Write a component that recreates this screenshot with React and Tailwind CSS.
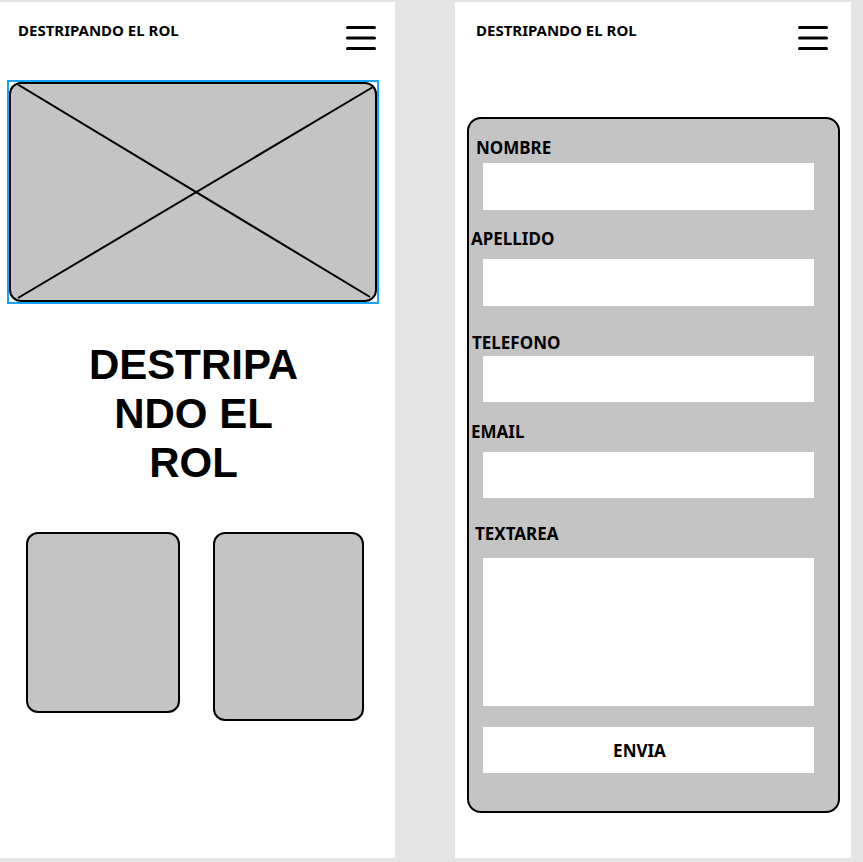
import React from "react";

const font = { fontFamily: '"Noto Sans", "Open Sans", sans-serif' };
const titleFont = { fontFamily: '"Liberation Sans", Arial, sans-serif' };

const Burger = () => (
  <svg width="30" height="25" viewBox="0 0 30 25" className="mt-[5.5px]">
    <line x1="1.5" y1="1.5" x2="28.5" y2="1.5" stroke="#000" strokeWidth="3" strokeLinecap="round" />
    <line x1="1.5" y1="12" x2="28.5" y2="12" stroke="#000" strokeWidth="3" strokeLinecap="round" />
    <line x1="1.5" y1="22.5" x2="28.5" y2="22.5" stroke="#000" strokeWidth="3" strokeLinecap="round" />
  </svg>
);

const Header = ({ pl, pr }) => (
  <div className={`h-[78px] flex items-start justify-between pt-[18px] ${pl} ${pr}`}>
    <span className="text-[15px] leading-[20px] font-bold text-black">DESTRIPANDO EL ROL</span>
    <Burger />
  </div>
);

const Field = ({ label, labelCls, inputCls }) => (
  <>
    <label className={`block text-[17px] leading-[22px] font-bold text-black ${labelCls}`}>{label}</label>
    <div className={`ml-[14px] w-[331px] bg-white ${inputCls}`} />
  </>
);

export default function App() {
  return (
    <div className="w-[863px] h-[862px] bg-[#e4e4e4] pt-[2px] flex" style={font}>
      {/* home screen */}
      <div className="w-[395px] h-[856px] bg-white flex flex-col">
        <Header pl="pl-[18px]" pr="pr-[19px]" />

        <div className="ml-[7px] w-[372px] h-[224px] border-2 border-[#18a0fb]">
          <div className="relative w-full h-full bg-[#c4c4c4] border-2 border-black rounded-[12px] overflow-hidden">
            <svg className="absolute -inset-[2px]" width="368" height="220" viewBox="0 0 368 220">
              <line x1="8" y1="2" x2="361" y2="215" stroke="#000" strokeWidth="2" />
              <line x1="9" y1="216" x2="364" y2="5" stroke="#000" strokeWidth="2" />
            </svg>
          </div>
        </div>

        <h1
          className="mt-[36px] w-[387px] flex flex-col items-center text-[42px] leading-[49px] font-bold text-black"
          style={titleFont}
        >
          <span>DESTRIPA</span>
          <span>NDO EL</span>
          <span>ROL</span>
        </h1>

        <div className="mt-[45px] flex items-start">
          <div className="ml-[26px] w-[154px] h-[181px] bg-[#c4c4c4] border-2 border-black rounded-[12px]" />
          <div className="ml-[33px] w-[151px] h-[189px] bg-[#c4c4c4] border-2 border-black rounded-[12px]" />
        </div>
      </div>

      {/* contact screen */}
      <div className="ml-[60px] w-[396px] h-[856px] bg-white flex flex-col">
        <Header pl="pl-[21px]" pr="pr-[23px]" />

        <form className="mt-[37px] ml-[12px] w-[373px] h-[696px] bg-[#c4c4c4] border-2 border-black rounded-[14px] flex flex-col">
          <Field label="NOMBRE" labelCls="mt-[18px] ml-[7px]" inputCls="mt-[4px] h-[47px]" />
          <Field label="APELLIDO" labelCls="mt-[18px] ml-[2px]" inputCls="mt-[9px] h-[47px]" />
          <Field label="TELEFONO" labelCls="mt-[26px] ml-[3px]" inputCls="mt-[2px] h-[46px]" />
          <Field label="EMAIL" labelCls="mt-[19px] ml-[2px]" inputCls="mt-[9px] h-[46px]" />
          <Field label="TEXTAREA" labelCls="mt-[25px] ml-[6px]" inputCls="mt-[13px] h-[148px]" />
          <button
            type="button"
            className="mt-[21px] ml-[14px] w-[331px] h-[46px] bg-white pr-[18px] pt-[2px] text-[17px] leading-[22px] font-bold text-black"
          >
            ENVIA
          </button>
        </form>
      </div>
    </div>
  );
}
